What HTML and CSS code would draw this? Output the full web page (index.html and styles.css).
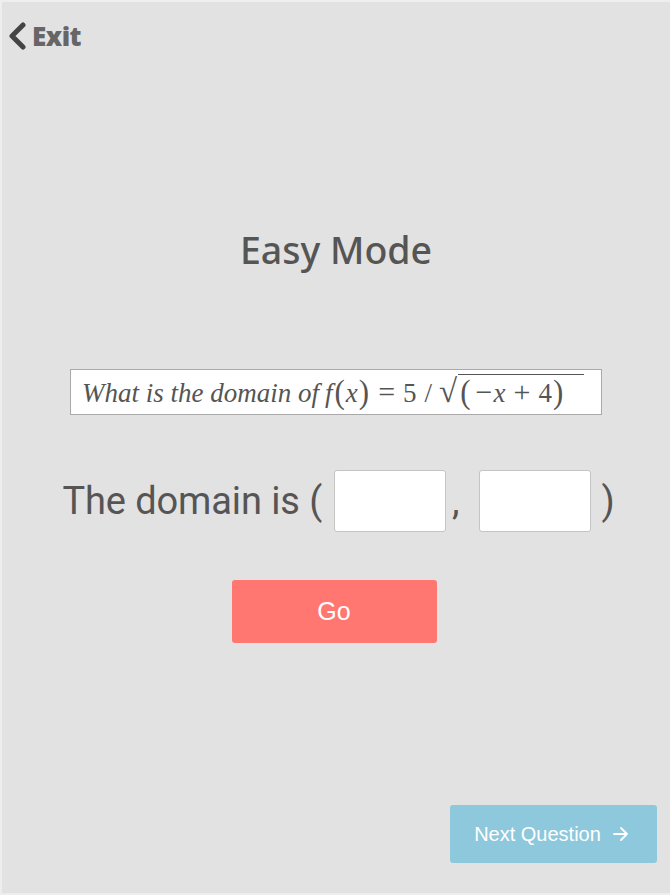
FILE: index.html
```html
<!DOCTYPE html>
<html>
<head>
<meta charset="utf-8">
<link rel="stylesheet" href="styles.css">
</head>
<body>
<div class="page">
  <header class="top">
    <a class="exit" href="#">
      <svg class="chev" width="20" height="28" viewBox="0 0 20 28"><path d="M16 3 L5 14 L16 25" fill="none" stroke="#444" stroke-width="5" stroke-linecap="round" stroke-linejoin="round"/></svg>
      <span>Exit</span>
    </a>
  </header>
  <main class="main">
    <h1 class="title">Easy Mode</h1>
    <div class="question"><span class="q-text"><span class="words">What is the domain of</span><i class="f">f</i><span class="p big">(</span><i>x</i><span class="p big">)</span><span class="op">=</span><span>5</span><span class="op sl">/</span><span class="sqrt">√</span><span class="rad"><span class="p big">(</span><span class="minus">−</span><i>x</i><span class="op">+</span><span>4</span><span class="p big">)</span></span></span></div>
    <div class="answer">
      <span>The domain is (</span>
      <input class="box" type="text">
      <span class="comma">,</span>
      <input class="box" type="text">
      <span class="close">)</span>
    </div>
    <button class="go">Go</button>
  </main>
  <footer class="bottom">
    <button class="next">Next Question <svg class="arrow" width="16" height="16" viewBox="0 0 16 16"><path d="M1 8 H14 M8 2 L14 8 L8 14" fill="none" stroke="#fff" stroke-width="1.8" stroke-linecap="round" stroke-linejoin="round"/></svg></button>
  </footer>
</div>
</body>
</html>
```
FILE: styles.css
```css
html, body { margin: 0; padding: 0; }
body { background: #e2e2e2; }
.page {
  box-sizing: border-box;
  width: 670px;
  height: 895px;
  border: 2px solid #eeeeee;
  border-right-width: 0;
  display: flex;
  flex-direction: column;
  font-family: "Noto Sans", sans-serif;
}
.top { height: 60px; padding: 19px 0 0 5px; box-sizing: border-box; }
.exit {
  display: inline-flex;
  align-items: center;
  gap: 5px;
  text-decoration: none;
  color: #666;
  font-family: "Open Sans", sans-serif;
  font-weight: 800;
  font-size: 26px;
  line-height: 30px;
  letter-spacing: -0.5px;
}
.chev { display: block; }
.main { flex: 1; display: flex; flex-direction: column; align-items: center; }
.title {
  margin: 166px 0 0 0;
  font-weight: 500;
  font-size: 37.5px;
  color: #555;
  line-height: 44px;
}
.question {
  margin-top: 97px;
  box-sizing: border-box;
  width: 532px;
  height: 46px;
  background: #fff;
  border: 1px solid #a9a9a9;
  padding: 0 0 0 11px;
  align-self: flex-start;
  margin-left: 68px;
  display: flex;
  align-items: center;
}
.q-text {
  display: flex;
  align-items: baseline;
  font-family: "Liberation Serif", serif;
  font-size: 27px;
  color: #555;
  white-space: nowrap;
  line-height: 34px;
}
.words { font-style: italic; margin-right: 6px; }
.q-text i { font-style: italic; }
.f { margin-right: 1px; }
.p.big { font-size: 31px; transform: scaleY(1.1); display: inline-block; margin: 0 1px; }
.op { margin: 0 8px; font-size: 30px; }
.sl { margin: 0 7px 0 8px; font-size: 27px; }
.sqrt { font-size: 33px; margin-right: 1px; }
.rad { display: flex; align-items: baseline; border-top: 1px solid #555; padding-right: 20px; }
.rad .p.big:first-child { margin: 0 5px 0 2px; }
.minus { margin-right: 1px; font-size: 30px; }
.answer {
  margin-top: 55px;
  display: flex;
  align-items: center;
  font-family: "Roboto", sans-serif;
  font-size: 38px;
  color: #555;
  letter-spacing: -0.1px;
  margin-left: 5px;
}
.box {
  box-sizing: border-box;
  width: 112px;
  height: 62px;
  border: 1px solid #c4c4c4;
  border-radius: 3px;
  background: #fff;
  margin: 0 0 0 12px;
}
.comma { margin: 0 8px 0 6px; }
.close { margin-left: 10px; }
.go {
  margin-top: 48px;
  width: 205px;
  height: 63px;
  border: none;
  border-radius: 3px;
  background: #ff7770;
  color: #fff;
  font-family: "Liberation Sans", sans-serif;
  font-size: 25px;
  margin-left: -4px;
}
.bottom { display: flex; justify-content: flex-end; padding: 0 13px 30px 0; }
.next {
  width: 207px;
  height: 58px;
  border: none;
  border-radius: 3px;
  background: #8ec8dc;
  color: #fff;
  font-family: "Liberation Sans", sans-serif;
  font-size: 20px;
  letter-spacing: 0;
  display: flex;
  align-items: center;
  justify-content: center;
  padding-right: 10px;
}
.arrow { margin-left: 12px; }
```
